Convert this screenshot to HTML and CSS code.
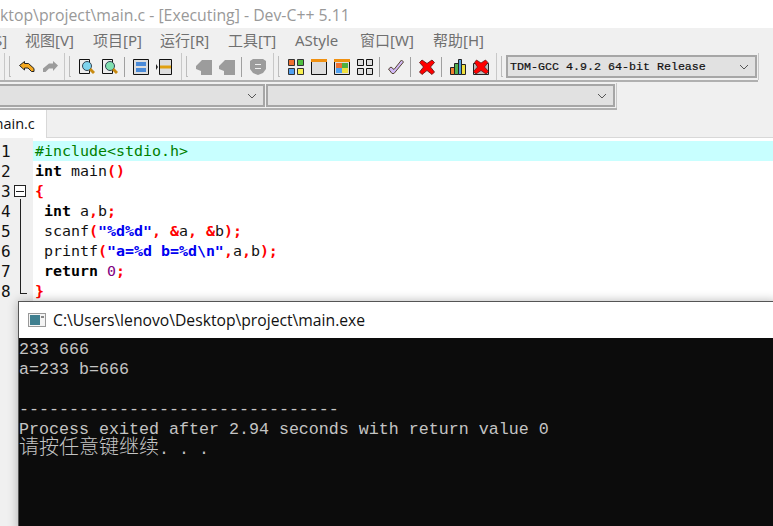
FILE: index.html
```html
<!DOCTYPE html>
<html lang="zh">
<head>
<meta charset="utf-8">
<title>Dev-C++ 5.11</title>
<link rel="stylesheet" href="styles.css">
</head>
<body>
<div class="ide">
  <div class="titlebar">ktop\project\main.c - [Executing] - Dev-C++ 5.11</div>
  <nav class="menu">
    <span class="m m0">S]</span><span class="m m1">视图[V]</span><span class="m m2">项目[P]</span><span class="m m3">运行[R]</span><span class="m m4">工具[T]</span><span class="m m5">AStyle</span><span class="m m6">窗口[W]</span><span class="m m7">帮助[H]</span>
  </nav>
  <div class="toolbar">
    <i class="edge e0"></i><i class="grip"></i>
    <svg class="ic" viewBox="0 0 16 16"><path d="M.5 6.500 5.500 2.500v2h4l5.500 5v3h-2.500l-3.500-3.500h-3.500v2z" fill="#f4a820" stroke="#222"/></svg>
    <svg class="ic" viewBox="0 0 16 16"><path d="M16 6.500 11 2v2.500H7L1 9.500V13h2.500L7 9.500h4V12z" fill="#9c9c9c"/></svg>
    <i class="edge e1"></i><i class="grip"></i>
    <svg class="ic" viewBox="0 0 16 16"><path d="M.5.500h10v14H.5z" fill="#eee" stroke="#111"/><circle cx="8" cy="7" r="4.500" fill="#7fd4ee" stroke="#345"/><path d="m11 10 4 4" stroke="#c88a10" stroke-width="3"/></svg>
    <svg class="ic" viewBox="0 0 16 16"><path d="M.5.500h10v14H.5z" fill="#eee" stroke="#111"/><circle cx="8" cy="7" r="4.500" fill="#80e0b0" stroke="#345"/><path d="m11 10 4 4" stroke="#c88a10" stroke-width="3"/></svg>
    <i class="div"></i>
    <svg class="ic" viewBox="0 0 16 16"><path d="M.5.500h15v15H.5z" fill="#ddd" stroke="#111"/><path d="M3 3h10v4H3z" fill="#4a8ad8"/><path d="M3 9h10v4H3z" fill="#4a8ad8"/></svg>
    <svg class="ic" viewBox="0 0 16 16"><path d="M3.500.500h12v15h-12z" fill="#ddd" stroke="#111"/><path d="M4 6.500h11v3H4z" fill="#e0a010"/><path d="M0 5l2 3-2 3z" fill="#222"/></svg>
    <i class="edge e2"></i><i class="grip"></i>
    <svg class="ic" viewBox="0 0 16 16"><path d="M0 7l6-6h10v15H5V12L0 10z" fill="#9c9c9c"/></svg>
    <svg class="ic" viewBox="0 0 16 16"><path d="M0 7l6-6h10v15H5V12L0 10z" fill="#9c9c9c"/></svg>
    <i class="div"></i>
    <svg class="ic" viewBox="0 0 16 16"><path d="M0 2 3 0h10l3 2v8l-3 4-5 2-5-2-3-4z" fill="#9c9c9c"/><path d="M5 5.500h6M5 9.500h6" stroke="#eee"/></svg>
    <i class="edge e3"></i><i class="grip"></i>
    <svg class="ic" viewBox="0 0 16 16"><path d="M.5.500h6v6h-6z" fill="#f07030" stroke="#333"/><path d="M9.500.500h6v6h-6z" fill="#50c040" stroke="#333"/><path d="M.5 9.500h6v6h-6z" fill="#50a0f0" stroke="#333"/><path d="M9.500 9.500h6v6h-6z" fill="#f8f050" stroke="#333"/></svg>
    <svg class="ic" viewBox="0 0 16 16"><path d="M.5.500h15v15H.5z" fill="#ddd" stroke="#111"/><path d="M0 0h16v3H0z" fill="#f09010"/></svg>
    <svg class="ic" viewBox="0 0 16 16"><path d="M.5.500h15v15H.5z" fill="#ddd" stroke="#111"/><path d="M0 0h16v3H0z" fill="#f09010"/><path d="M2 4h6v5H2z" fill="#f07030"/><path d="M8 4h6v5H8z" fill="#50b040"/><path d="M2 9h6v5H2z" fill="#50a0f0"/><path d="M8 9h6v5H8z" fill="#f0e040"/></svg>
    <svg class="ic" viewBox="0 0 16 16"><path d="M.5.500h6v6h-6zM9.500.500h6v6h-6zM.5 9.500h6v6h-6zM9.500 9.500h6v6h-6z" fill="#ddd" stroke="#111"/></svg>
    <i class="div"></i>
    <svg class="ic" viewBox="0 0 16 16"><path d="M.5 10l2.500-2 3 2.500L13.500 1l2 2L6 14.500H4z" fill="#d0b8f4" stroke="#543"/></svg>
    <i class="div"></i>
    <svg class="ic" viewBox="0 0 16 16"><path d="M3 1 8 4.500 13 1l2.500 2.500L11.500 8l4 5-2.500 2.500-5-4-5 4L.5 13l4-5-4-4.500z" fill="#f00" stroke="#511" stroke-width=".8"/></svg>
    <i class="div"></i>
    <svg class="ic" viewBox="0 0 16 16"><path d="M.5 8.500h4v7h-4z" fill="#f08030" stroke="#222"/><path d="M4.500 4.500h4v11h-4z" fill="#50b050" stroke="#222"/><path d="M8.500.500h3v15h-3z" fill="#50a0e0" stroke="#222"/><path d="M11.500 5.500h4v10h-4z" fill="#f0e040" stroke="#222"/></svg>
    <svg class="ic" viewBox="0 0 16 16"><path d="M.5 4.500h15v11H.5z" fill="#bbb" stroke="#222"/><path d="M3.500 1 8 4l4.500-3 2.500 2.500L11.500 8l4 4.500L13 15l-5-3.500L3 15 .5 12.500l4-4.500-3-4.500z" fill="#f00" stroke="#511" stroke-width=".7"/></svg>
    <i class="edge e4"></i><i class="grip"></i>
    <div class="combo tdm"><span class="tdm-text">TDM-GCC 4.9.2 64-bit Release</span><svg class="chev" viewBox="0 0 10 6"><path d="M1 1l4 4 4-4" fill="none" stroke="#555"/></svg></div>
    <i class="edge e5"></i>
  </div>
  <div class="classbar">
    <div class="combo c1"><svg class="chev" viewBox="0 0 10 6"><path d="M1 1l4 4 4-4" fill="none" stroke="#555"/></svg></div>
    <div class="combo c2"><svg class="chev" viewBox="0 0 10 6"><path d="M1 1l4 4 4-4" fill="none" stroke="#555"/></svg></div>
    <i class="edge e6"></i>
  </div>
  <div class="tabs"><div class="tab">main.c</div></div>
  <div class="editor">
    <div class="gutter">
      <div class="num">1</div><div class="num">2</div>
      <div class="num">3<span class="fold"></span></div>
      <div class="num">4<span class="vl"></span></div><div class="num">5<span class="vl"></span></div><div class="num">6<span class="vl"></span></div><div class="num">7<span class="vl"></span></div>
      <div class="num">8<span class="vl end"></span></div>
    </div>
    <div class="code">
      <div class="ln hl"><span class="pp">#include&lt;stdio.h&gt;</span></div>
      <div class="ln"><b>int</b> main<span class="sy">()</span></div>
      <div class="ln"><span class="sy">{</span></div>
      <div class="ln"> <b>int</b> a<span class="sy">,</span>b<span class="sy">;</span></div>
      <div class="ln"> scanf<span class="sy">(</span><span class="st">"%d%d"</span><span class="sy">, &amp;</span>a<span class="sy">, &amp;</span>b<span class="sy">);</span></div>
      <div class="ln"> printf<span class="sy">(</span><span class="st">"a=%d b=%d\n"</span><span class="sy">,</span>a<span class="sy">,</span>b<span class="sy">);</span></div>
      <div class="ln"> <b>return</b> <span class="nm">0</span><span class="sy">;</span></div>
      <div class="ln"><span class="sy">}</span></div>
    </div>
  </div>
</div>
<section class="console">
  <header class="con-title">
    <svg class="con-ic" viewBox="0 0 18 14"><rect x=".5" y=".5" width="17" height="13" fill="#f4f4f4" stroke="#999"/><rect x="2" y="2" width="10" height="10" fill="#3f7f8f"/><rect x="13" y="3" width="3" height="2" fill="#888"/></svg>
    <span>C:\Users\lenovo\Desktop\project\main.exe</span>
  </header>
  <pre class="con-body">233 666
a=233 b=666

--------------------------------
Process exited after 2.94 seconds with return value 0
<span class="cjk">请按任意键继续</span>. . .</pre>
</section>
</body>
</html>
```
FILE: styles.css
```css
html, body { margin: 0; padding: 0; }
body { width: 773px; height: 526px; overflow: hidden; position: relative; background: #fff; }
.ide { width: 773px; height: 526px; overflow: hidden; display: flex; flex-direction: column; background: #f0f0f0; }
.titlebar { height: 28px; background: #fff; color: #999; font: 15.8px/30px "Open Sans", "Noto Sans", sans-serif; white-space: nowrap; }
.menu { height: 25px; display: flex; color: #707070; font: 15px/24px "Noto Sans", "Noto Sans CJK SC", sans-serif; white-space: nowrap; }
.m0 { width: 25px; margin-left: -6px; margin-right: 6px; }
.m1, .m2, .m3, .m4, .m5, .m6, .m7 { display: block; }
.m1 { width: 68px; } .m2 { width: 67px; } .m3 { width: 68px; } .m4 { width: 67px; } .m5 { width: 65px; } .m6 { width: 73px; }
.toolbar { height: 27px; display: flex; align-items: center; border-bottom: 2px solid #b0b0b0; width: 758px; box-sizing: content-box; }
.ic { width: 16px; height: 16px; margin-right: 7px; flex: none; }
.edge { width: 1px; align-self: stretch; background: #c8c8c8; flex: none; }
.e0 { margin-left: 4px; }
.e1 { margin-left: -1px; }
.e2 { margin-left: 2px; }
.e3 { margin-left: 0; }
.e4 { margin-left: 0; }
.e5 { margin-left: 1px; }
.grip { width: 2px; height: 21px; margin: 0 8px 0 4px; border-left: 1px solid #bdbdbd; border-bottom: 1px solid #bdbdbd; box-sizing: border-box; flex: none; }
.div { width: 1px; height: 20px; background: #a0a0a0; margin: 0 8px 0 -1px; flex: none; }
.combo { box-sizing: border-box; border: 2px solid #a6a6a6; background: #e1e1e1; display: flex; align-items: center; justify-content: flex-end; flex: none; height: 23px; }
.tdm { width: 251px; justify-content: space-between; margin-left: -5px; }
.tdm-text { font: 11.67px "Liberation Mono", monospace; color: #111; margin-left: 2px; -webkit-text-stroke: .2px #111; }
.chev { width: 10px; height: 6px; margin-right: 6px; }
.classbar { height: 25px; display: flex; align-items: center; border-bottom: 2px solid #b0b0b0; width: 617px; padding-top: 1px; }
.c1 { width: 265px; margin-right: 1px; border-left: 0; }
.c2 { width: 349px; }
.e6 { margin-left: 1px; }
.tabs { height: 27px; border-bottom: 1px solid #d8d8d8; flex: none; }
.tab { width: 47px; height: 28px; box-sizing: border-box; background: #fff; text-indent: -10px; color: #111; font: 14.5px/27px "Open Sans", "Noto Sans", sans-serif; overflow: hidden; border-right: 1px solid #d8d8d8; }
.editor { flex: 1; display: flex; background: #fff; }
.gutter { width: 33px; background: #f0f0f0; padding-top: 4px; flex: none; }
.num { position: relative; height: 20px; font: 16px/20px "DejaVu Sans Mono", monospace; color: #111; padding-left: 1px; }
.fold { position: absolute; left: 14px; top: 3px; width: 12px; height: 12px; border: 1px solid #222; box-sizing: border-box; background: linear-gradient(#222, #222) center / 8px 1px no-repeat #fff; }
.vl { position: absolute; left: 20px; top: -3px; height: 23px; width: 1px; background: #222; }
.vl.end { height: 15px; width: 7px; background: none; border-left: 1px solid #222; border-bottom: 1px solid #222; box-sizing: border-box; }
.code { flex: 1; padding-top: 3px; font: 14.95px/20px "DejaVu Sans Mono", monospace; color: #111; }
.ln { height: 20px; padding-left: 2px; white-space: pre; }
.hl { background: #c8ffff; }
.pp { color: #008000; }
.code b { color: #000; }
.sy { color: #f00; font-weight: 700; }
.st { color: #0000f0; font-weight: 700; }
.nm { color: #800080; }
.console { position: absolute; left: 18px; top: 301px; width: 760px; height: 230px; background: #fff; border: 1px solid #555; box-sizing: border-box; box-shadow: 0 0 10px rgba(0,0,0,.28); display: flex; flex-direction: column; }
.con-title { height: 36px; display: flex; align-items: center; color: #111; font: 15.7px "Open Sans", "Noto Sans", sans-serif; flex: none; }
.con-ic { width: 18px; height: 14px; margin: 0 7px 0 9px; }
.con-body { margin: 0; flex: 1; background: #0c0c0c; color: #c4c4c4; font: 16.67px/20px "Liberation Mono", monospace; padding-top: 2px; }
.cjk { font: 300 20px/0 "Noto Sans CJK SC", sans-serif; }
```
